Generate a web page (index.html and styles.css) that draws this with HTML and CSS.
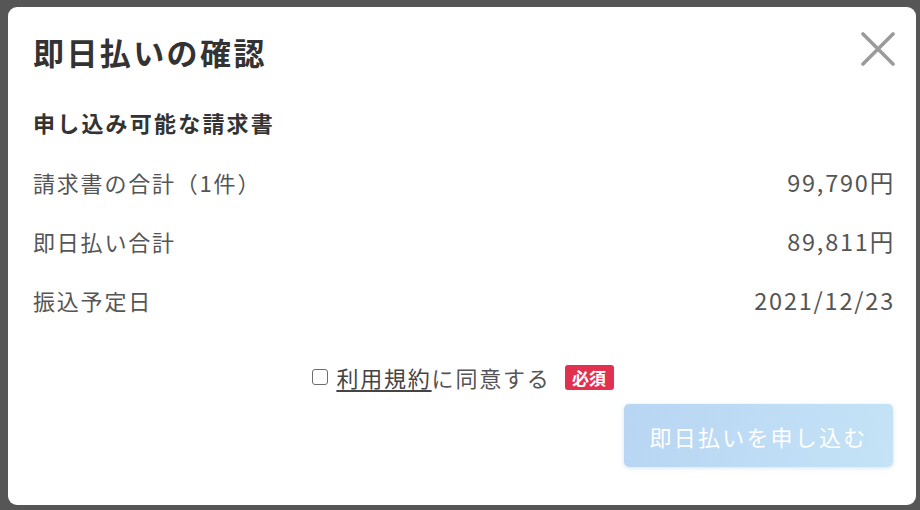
FILE: index.html
```html
<!DOCTYPE html>
<html lang="ja">
<head>
<meta charset="utf-8">
<link rel="stylesheet" href="styles.css">
</head>
<body>
<div class="overlay">
  <div class="modal">
    <div class="header">
      <h1 class="title">即日払いの確認</h1>
      <button class="close" aria-label="閉じる">
        <svg width="34" height="34" viewBox="0 0 34 34"><path d="M2 2 L32 32 M32 2 L2 32" stroke="#9b9b9b" stroke-width="3.6" stroke-linecap="round" fill="none"/></svg>
      </button>
    </div>
    <h2 class="subtitle">申し込み可能な請求書</h2>
    <div class="row"><span class="label">請求書の合計（1件）</span><span class="value">99,790円</span></div>
    <div class="row"><span class="label">即日払い合計</span><span class="value">89,811円</span></div>
    <div class="row"><span class="label">振込予定日</span><span class="value">2021/12/23</span></div>
    <div class="agree">
      <span class="checkbox"></span>
      <span class="agree-text"><span class="link">利用規約</span>に同意する</span>
      <span class="badge">必須</span>
    </div>
    <div class="actions">
      <button class="submit">即日払いを申し込む</button>
    </div>
  </div>
</div>
</body>
</html>
```
FILE: styles.css
```css
html, body {
  margin: 0;
  padding: 0;
}
body {
  background: #565656;
  font-family: "Noto Sans CJK JP", "Noto Sans", sans-serif;
  width: 920px;
  height: 510px;
  overflow: hidden;
}
.overlay {
  padding: 7px 4px 5px 8px;
}
.modal {
  width: 908px;
  height: 498px;
  box-sizing: border-box;
  background: #fff;
  border-radius: 9px;
  padding: 0 23px 0 25px;
  display: flex;
  flex-direction: column;
}
.header {
  height: 84px;
  display: flex;
  align-items: center;
  justify-content: space-between;
}
.title {
  margin: 0;
  font-size: 31px;
  font-weight: 700;
  letter-spacing: 2.4px;
  color: #333;
  line-height: 1;
  padding-top: 4px;
}
.close {
  border: 0;
  background: none;
  padding: 0;
  margin-right: -2px;
  width: 34px;
  height: 34px;
  display: flex;
}
.subtitle {
  margin: 0;
  height: 61px;
  display: flex;
  align-items: center;
  font-size: 22px;
  font-weight: 700;
  letter-spacing: 2.2px;
  color: #333;
}
.row {
  height: 59px;
  display: flex;
  align-items: center;
  justify-content: space-between;
  font-size: 22px;
  letter-spacing: 1.8px;
  color: #555;
}
.value {
  font-size: 23.5px;
  letter-spacing: 1.8px;
  margin-right: -2px;
}
.agree {
  margin-top: 28px;
  height: 40px;
  display: flex;
  align-items: center;
  justify-content: center;
  font-size: 22px;
  letter-spacing: 1.8px;
  color: #555;
  padding-left: 0;
}
.checkbox {
  width: 14px;
  height: 14px;
  border: 1.5px solid #6d6d6d;
  border-radius: 3px;
  margin-right: 8px;
}
.link {
  color: #444;
  text-decoration: underline;
  text-underline-offset: 3px;
}
.badge {
  margin-left: 14px;
  background: #e2304f;
  color: #fff;
  font-size: 17px;
  font-weight: 700;
  letter-spacing: 0;
  border-radius: 3px;
  width: 49px;
  height: 25px;
  display: flex;
  align-items: center;
  justify-content: center;
}
.actions {
  margin-top: 7px;
  display: flex;
  justify-content: flex-end;
}
.submit {
  width: 269px;
  height: 63px;
  border: 0;
  border-radius: 5px;
  background: linear-gradient(100deg, #b8d5f3, #c4e3f6);
  box-shadow: 0 1px 4px rgba(120, 160, 200, 0.3);
  color: #fff;
  font-family: "Noto Sans CJK JP", "Noto Sans", sans-serif;
  font-size: 22px;
  letter-spacing: 2.2px;
  padding: 0;
}
```
